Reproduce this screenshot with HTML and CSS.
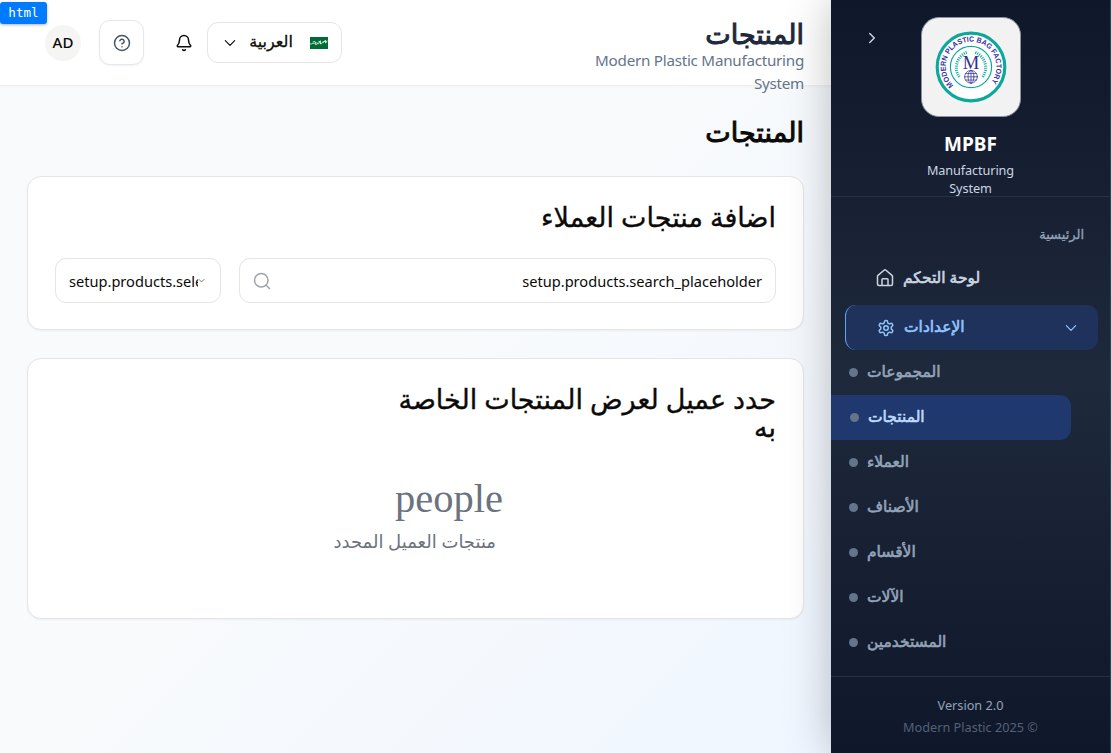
FILE: index.html
```html
<!DOCTYPE html>
<html lang="ar">
<head>
<meta charset="utf-8">
<title>المنتجات</title>
<link rel="stylesheet" href="styles.css">
</head>
<body>
<div class="app">
  <div class="main">
    <header class="topbar">
      <div class="avatar">AD</div>
      <button class="help"><svg width="18" height="18" viewBox="0 0 24 24"><circle cx="12" cy="12" r="10"/><path d="M9.09 9a3 3 0 0 1 5.83 1c0 2-3 3-3 3M12 17h.01"/></svg></button>
      <svg class="bell" width="18" height="18" viewBox="0 0 24 24"><path d="M10.27 21a2 2 0 0 0 3.46 0M3.26 15.33A1 1 0 0 0 4 17h16a1 1 0 0 0 .74-1.67C19.41 13.96 18 12.5 18 8A6 6 0 0 0 6 8c0 4.5-1.41 5.96-2.74 7.33"/></svg>
      <button class="lang">
        <svg width="14" height="14" viewBox="0 0 24 24"><path d="m4 8 8 8 8-8"/></svg>
        <span class="lang-name" dir="rtl">العربية</span>
        <svg class="flag" width="18" height="12" viewBox="0 0 18 12"><path class="flag-field" d="M0 0h18v12H0z"/><path class="flag-script" d="M.5 7q1 1 2-1 1 2 2 0l1.500-1-.5 2.500q1.500.5 2-1.500 1 1.500 2 0l1-1.500v2.500q1.500 0 2-2 1 1.500 2-.5l1-1v2.500q1 0 1.500-2M3 5l1.500-.5m4 .5 2-1m3 .5 2-.7"/></svg>
      </button>
      <div class="heading">
        <h2 class="heading-title" dir="rtl">المنتجات</h2>
        <p class="heading-sub">Modern Plastic Manufacturing System</p>
      </div>
    </header>
    <main class="content">
      <h1 class="page-title" dir="rtl">المنتجات</h1>
      <section class="card card-add">
        <h3 class="card-title" dir="rtl">اضافة منتجات العملاء</h3>
        <div class="filters">
          <div class="select"><span class="select-text">setup.products.select</span><svg width="7" height="7" viewBox="0 0 24 24"><path d="m3 8 9 9 9-9"/></svg></div>
          <div class="search"><svg width="18" height="18" viewBox="0 0 24 24"><circle cx="11" cy="11" r="9"/><path d="m18 18 4 4"/></svg><span>setup.products.search_placeholder</span></div>
        </div>
      </section>
      <section class="card card-list">
        <h3 class="card-title" dir="rtl">حدد عميل لعرض المنتجات الخاصة<br>به</h3>
        <div class="empty"><div class="empty-icon">people</div><p class="empty-text" dir="rtl">منتجات العميل المحدد</p></div>
      </section>
    </main>
  </div>
  <aside class="sidebar">
    <div class="brand">
      <svg class="collapse" width="18" height="18" viewBox="0 0 24 24"><path d="m9 18 6-6-6-6"/></svg>
      <svg class="logo" width="100" height="100" viewBox="-50 -50 100 100">
        <defs><path id="ring-path" d="M-17.800 18.600A25.800 25.800 0 1 1 17.800 18.600"/></defs>
        <circle class="ring-outer" r="34.500"/>
        <circle class="ring-inner" r="21"/>
        <text class="ring-text"><textPath href="#ring-path" textLength="118" lengthAdjust="spacingAndGlyphs">MODERN PLASTIC BAG FACTORY</textPath></text>
        <path class="laurel" d="M-12 10A16.500 16.500 0 0 1-4-15M12 10A16.500 16.500 0 0 0 4-15"/>
        <text class="logo-m" y="2.500">M</text>
        <g class="globe"><circle cy="10" r="6.500"/><ellipse cy="10" rx="3" ry="6.500"/><path d="M0 3.500v13M-6.500 10h13M-5.500 6.700h11M-5.500 13.300h11"/></g>
      </svg>
      <div class="brand-name">MPBF</div>
      <div class="brand-sub">Manufacturing<br>System</div>
    </div>
    <nav class="nav">
      <div class="nav-label" dir="rtl">الرئيسية</div>
      <a class="nav-item"><svg width="18" height="18" viewBox="0 0 24 24"><path d="M8 22v-8a1 1 0 0 1 1-1h6a1 1 0 0 1 1 1v8M2 10a2 2 0 0 1 .7-1.500l8-6.800a2 2 0 0 1 2.600 0l8 6.800A2 2 0 0 1 22 10v10a2 2 0 0 1-2 2H4a2 2 0 0 1-2-2z"/></svg><span dir="rtl">لوحة التحكم</span></a>
      <a class="nav-item open"><svg width="18" height="18" viewBox="0 0 24 24"><path d="M12.220 2h-.44a2 2 0 0 0-2 2v.18a2 2 0 0 1-1 1.730l-.43.25a2 2 0 0 1-2 0l-.15-.08a2 2 0 0 0-2.730.73l-.22.38a2 2 0 0 0 .73 2.730l.15.1a2 2 0 0 1 1 1.720v.51a2 2 0 0 1-1 1.740l-.15.09a2 2 0 0 0-.73 2.730l.22.38a2 2 0 0 0 2.730.73l.15-.08a2 2 0 0 1 2 0l.43.25a2 2 0 0 1 1 1.730V20a2 2 0 0 0 2 2h.44a2 2 0 0 0 2-2v-.18a2 2 0 0 1 1-1.730l.43-.25a2 2 0 0 1 2 0l.15.08a2 2 0 0 0 2.730-.73l.22-.39a2 2 0 0 0-.73-2.730l-.15-.08a2 2 0 0 1-1-1.740v-.5a2 2 0 0 1 1-1.740l.15-.09a2 2 0 0 0 .73-2.730l-.22-.38a2 2 0 0 0-2.730-.73l-.15.08a2 2 0 0 1-2 0l-.43-.25a2 2 0 0 1-1-1.730V4a2 2 0 0 0-2-2z"/><circle cx="12" cy="12" r="3"/></svg><span dir="rtl">الإعدادات</span><svg class="chev" width="14" height="14" viewBox="0 0 24 24"><path d="m4 8 8 8 8-8"/></svg></a>
      <a class="sub-item"><i class="dot"></i><span dir="rtl">المجموعات</span></a>
      <a class="sub-item active"><i class="dot"></i><span dir="rtl">المنتجات</span></a>
      <a class="sub-item"><i class="dot"></i><span dir="rtl">العملاء</span></a>
      <a class="sub-item"><i class="dot"></i><span dir="rtl">الأصناف</span></a>
      <a class="sub-item"><i class="dot"></i><span dir="rtl">الأقسام</span></a>
      <a class="sub-item"><i class="dot"></i><span dir="rtl">الآلات</span></a>
      <a class="sub-item"><i class="dot"></i><span dir="rtl">المستخدمين</span></a>
    </nav>
    <footer class="foot"><div>Version 2.0</div><div class="copy">Modern Plastic 2025 ©</div></footer>
  </aside>
</div>
<div class="tag">html</div>
</body>
</html>
```
FILE: styles.css
```css
* { box-sizing: border-box; margin: 0; padding: 0; }
body { font-family: "Noto Sans", "DejaVu Sans", sans-serif; color: #0c0a09; overflow: hidden; }
svg { fill: none; stroke: currentColor; stroke-width: 2; stroke-linecap: round; stroke-linejoin: round; flex: none; }
button { font: inherit; background: #fff; color: inherit; }
.app { display: flex; width: 1111px; height: 753px; }
.main { width: 831px; display: flex; flex-direction: column; background: linear-gradient(135deg, #f8fafc 0%, #f8fafc 50%, #eff6ff 100%); }
.topbar { height: 86px; display: flex; align-items: flex-start; background: #fff; border-bottom: 1px solid #eef0f3; box-shadow: 0 1px 2px rgba(0,0,0,.03); padding: 0 27px 0 45px; }
.avatar { width: 36px; height: 36px; margin-top: 25px; border-radius: 50%; background: #f5f5f4; font-size: 15px; font-weight: 500; line-height: 35px; text-align: center; }
.help { width: 45px; height: 45px; margin: 20px 0 0 18px; display: grid; place-items: center; border: 1px solid #e2e8f0; border-radius: 11px; color: #475569; box-shadow: 0 1px 2px rgba(0,0,0,.05); }
.bell { margin: 34px 0 0 31px; }
.lang { width: 135px; height: 41px; margin: 22px 0 0 14px; display: flex; align-items: center; border: 1px solid #e7e5e4; border-radius: 11px; padding: 0 13px 0 15px; }
.lang-name { width: 44px; margin-left: 12px; margin-top: -3px; font-size: 16px; white-space: nowrap; -webkit-text-stroke: .3px; }
.flag { margin-left: auto; stroke: none; }
.flag-field { fill: #006c35; }
.flag-script { stroke: #e5f1ea; stroke-width: .9; }
.heading { width: 225px; margin-left: auto; text-align: right; }
.heading-title { font-size: 27px; line-height: 30px; height: 30px; margin-top: 19px; color: #1e293b; font-weight: 400; -webkit-text-stroke: 1px; }
.heading-sub { font-size: 15.200px; line-height: 23px; color: #64748b; letter-spacing: -.25px; }
.content { padding: 27px 27px 0; }
.page-title { font-size: 27px; line-height: 38px; height: 38px; font-weight: 400; text-align: right; -webkit-text-stroke: 1px; }
.card { background: #fff; border: 1px solid #e7e5e4; border-radius: 14px; box-shadow: 0 1px 2px rgba(0,0,0,.05); padding: 27px; }
.card-add { height: 154px; margin-top: 25px; }
.card-list { height: 261px; margin-top: 28px; }
.card-title { font-size: 27px; font-weight: 400; line-height: 28px; margin-top: -1px; text-align: right; -webkit-text-stroke: .35px; }
.filters { display: flex; gap: 18px; margin-top: 27px; font-size: 14.600px; }
.select, .search { height: 45px; display: flex; align-items: center; border: 1px solid #e7e5e4; border-radius: 11px; padding: 0 13px; }
.select { width: 166px; }
.select-text { width: 129px; overflow: hidden; white-space: nowrap; }
.select svg { color: #57534e; stroke-width: 2.500; }
.search { flex: 1; justify-content: space-between; }
.search svg { color: #9ca3af; }
.empty { width: 200px; margin: 31px 0 0 278px; color: #6b7280; }
.empty-icon { font: 40.500px/54px "Liberation Serif", serif; text-align: right; padding-right: 30px; }
.empty-text { font-size: 18px; line-height: 30px; padding-right: 37px; white-space: nowrap; }
.sidebar { position: relative; width: 280px; display: flex; flex-direction: column; background: linear-gradient(180deg, #0f172a 0%, #1e293b 50%, #0f172a 100%); border-right: 1px solid #334155; box-shadow: 0 0 42px rgba(0,0,0,.25); color: #cbd5e1; }
.brand { position: relative; height: 197px; padding-top: 17px; border-bottom: 1px solid #243247; display: flex; flex-direction: column; align-items: center; }
.collapse { position: absolute; left: 32px; top: 29px; }
.logo { background: #f2f2f2; border-radius: 18px; border: 1px solid #8b919d; }
.ring-outer { fill: #fff; stroke: #0ba89b; stroke-width: 3.200; }
.ring-inner { stroke: #0ba89b; stroke-width: 1.200; }
.ring-text { font: bold 7.600px "Liberation Sans", sans-serif; fill: #3730a3; stroke: none; }
.laurel { stroke: #0ba89b; stroke-width: 3; stroke-dasharray: 1 1.200; stroke-linecap: butt; }
.logo-m { font: 19px "Liberation Serif", serif; fill: #312e91; stroke: none; text-anchor: middle; }
.globe { stroke: #3b3a99; stroke-width: .8; }
.brand-name { margin-top: 13px; color: #fff; font-size: 19px; font-weight: 700; line-height: 28px; }
.brand-sub { margin-top: 3px; font-size: 12.700px; line-height: 18px; text-align: center; letter-spacing: -.1px; }
.nav { height: 479px; }
.nav-label { height: 24px; line-height: 24px; margin: 25px 26px 10px 0; color: #94a3b8; font-size: 13px; -webkit-text-stroke: .3px; }
.nav-item { display: flex; align-items: center; height: 45px; margin: 0 12px 4px 14px; padding-left: 31px; font-size: 15.500px; border-radius: 11px; }
.nav-item:not(.open) svg { margin-top: -2px; }
.nav-item span { margin: -4px 0 0 9px; -webkit-text-stroke: .6px; }
.nav-item.open { background: #1f325c; border-left: 1px solid #60a5fa; color: #93c5fd; margin-bottom: 0; }
.nav-item .chev { margin-left: auto; margin-right: 20px; }
.sub-item { display: flex; align-items: center; height: 45px; padding-left: 18px; color: #94a3b8; font-size: 15.500px; }
.sub-item span { margin: -4px 0 0 9px; white-space: nowrap; -webkit-text-stroke: .6px; }
.dot { width: 9px; height: 9px; margin-top: -1px; border-radius: 50%; background: #64748b; flex: none; }
.active { width: 240px; padding-left: 19px; background: #1f386d; border-radius: 0 11px 11px 0; color: #bfdbfe; }
.foot { flex: 1; border-top: 1px solid #243247; padding-top: 17px; text-align: center; font-size: 12.700px; line-height: 22px; color: #94a3b8; }
.copy { color: #536176; }
.tag { position: absolute; left: 0; top: 2px; width: 47px; height: 22px; border-radius: 3px; background: #007bff; color: #fff; font: 12.600px/21px "DejaVu Sans Mono", monospace; text-align: center; box-shadow: 0 1px 3px rgba(0,0,0,.3); }
```
